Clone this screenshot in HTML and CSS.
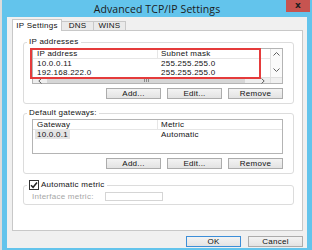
FILE: index.html
```html
<!DOCTYPE html>
<html lang="en">
<head>
    <meta charset="UTF-8">
    <meta name="viewport" content="width=device-width, initial-scale=1.0">
    <title>Advanced TCP/IP Settings</title>
    <link rel="stylesheet" href="styles.css">
</head>
<body>
    <div class="window">
        <div class="titlebar">
            <span class="title">Advanced TCP/IP Settings</span>
            <span class="close-btn">x</span>
        </div>
        <div class="client">
            <div class="tabs">
                <span class="tab active">IP Settings</span>
                <span class="tab">DNS</span>
                <span class="tab">WINS</span>
            </div>
            <div class="tab-panel">
                <fieldset class="group">
                    <legend>IP addresses</legend>
                    <div class="listview scrolled">
                        <div class="list-body">
                            <div class="lv-row lv-header"><span class="col-a">IP address</span><span class="col-b">Subnet mask</span></div>
                            <div class="lv-row"><span class="col-a">10.0.0.11</span><span class="col-b">255.255.255.0</span></div>
                            <div class="lv-row"><span class="col-a">192.168.222.0</span><span class="col-b">255.255.255.0</span></div>
                        </div>
                        <div class="vscroll">
                            <span class="arrow-box">
                                <svg width="7" height="4" viewBox="0 0 7 4"><path d="M0.5 3.5 L3.5 0.5 L6.5 3.5" fill="none" stroke="#606060" stroke-width="1"/></svg>
                            </span>
                            <span class="arrow-box">
                                <svg width="7" height="4" viewBox="0 0 7 4"><path d="M0.5 0.5 L3.5 3.5 L6.5 0.5" fill="none" stroke="#606060" stroke-width="1"/></svg>
                            </span>
                        </div>
                        <div class="hscroll">
                            <span class="harrow">
                                <svg width="4" height="6" viewBox="0 0 4 6"><path d="M3.5 0.5 L0.8 3 L3.5 5.5" fill="none" stroke="#606060" stroke-width="1"/></svg>
                            </span>
                            <span class="thumb"><span class="grip"></span></span>
                            <span class="harrow">
                                <svg width="4" height="6" viewBox="0 0 4 6"><path d="M0.5 0.5 L3.2 3 L0.5 5.5" fill="none" stroke="#606060" stroke-width="1"/></svg>
                            </span>
                        </div>
                        <div class="corner"></div>
                        <div class="red-mark"></div>
                    </div>
                    <div class="btn-row">
                        <button class="btn">Add...</button>
                        <button class="btn">Edit...</button>
                        <button class="btn">Remove</button>
                    </div>
                </fieldset>

                <fieldset class="group">
                    <legend>Default gateways:</legend>
                    <div class="listview">
                        <div class="lv-row lv-header"><span class="col-a">Gateway</span><span class="col-b">Metric</span></div>
                        <div class="lv-row"><span class="col-a"><span class="sel">10.0.0.1</span></span><span class="col-b">Automatic</span></div>
                    </div>
                    <div class="btn-row">
                        <button class="btn">Add...</button>
                        <button class="btn">Edit...</button>
                        <button class="btn">Remove</button>
                    </div>
                </fieldset>

                <fieldset class="group metric-group">
                    <legend class="check-legend">
                        <span class="checkbox">
                            <svg width="8" height="8" viewBox="0 0 8 8"><path d="M1 4.2 L3.1 6.3 L7 1.5" fill="none" stroke="#222" stroke-width="1.5"/></svg>
                        </span>
                        Automatic metric
                    </legend>
                    <div class="metric-row">
                        <span class="metric-label">Interface metric:</span>
                        <span class="metric-input"></span>
                    </div>
                </fieldset>
            </div>
            <div class="footer">
                <button class="btn default">OK</button>
                <button class="btn">Cancel</button>
            </div>
        </div>
    </div>
</body>
</html>
```

FILE: styles.css
```css
* {
    box-sizing: border-box;
}
html, body {
    margin: 0;
}
body {
    width: 312px;
    height: 250px;
    overflow: hidden;
    background: #dcdcdc;
    font-family: "Liberation Sans", Arial, sans-serif;
    font-size: 8px;
    letter-spacing: 0.25px;
    color: #111;
}
.window {
    margin-left: 2px;
    height: 250px;
    background: #63c4ec;
    padding: 0 5px 2px;
    display: flex;
    flex-direction: column;
}
.titlebar {
    height: 17px;
    margin: 0 -5px;
    position: relative;
    display: flex;
    align-items: center;
    justify-content: center;
}
.title {
    font-family: "Open Sans", sans-serif;
    font-size: 10.5px;
    letter-spacing: 0.1px;
    color: #1b1b1b;
}
.close-btn {
    position: absolute;
    top: 0;
    right: 2px;
    width: 24px;
    height: 12px;
    background: #c75450;
    color: #1e1e1e;
    font: bold 9px/11px "DejaVu Sans", sans-serif;
    text-align: center;
}
.client {
    flex: 1;
    background: #f0f0f0;
    padding: 2px 4px 0 5px;
    display: flex;
    flex-direction: column;
}

/* tabs */
.tabs {
    display: flex;
    align-items: flex-end;
    height: 11px;
}
.tab {
    width: 33px;
    height: 9px;
    margin-left: -1px;
    border: 1px solid #c8c8c8;
    border-bottom: 0;
    background: #eaeaea;
    line-height: 8px;
    text-align: center;
}
.tab.active {
    width: 50px;
    height: 12px;
    margin-left: 0;
    margin-bottom: -1px;
    background: #fff;
    line-height: 11px;
    position: relative;
    z-index: 1;
}
.tab-panel {
    flex: 1;
    background: #fff;
    border: 1px solid #c8c8c8;
    padding: 6px 8px 0 10px;
}

/* group boxes */
.group {
    margin: 0;
    min-width: 0;
    border: 1px solid #dcdcdc;
    border-radius: 3px;
    padding: 1px 10px 4px 8px;
}
.group + .group {
    margin-top: 4px;
}
legend {
    padding: 0 2px;
    margin-left: -5px;
    line-height: 10px;
}
.metric-group {
    margin-top: 6px !important;
    padding-top: 2px;
    padding-bottom: 3px;
}
.check-legend {
    display: flex;
    align-items: center;
    gap: 2px;
}
.checkbox {
    width: 10px;
    height: 10px;
    border: 1px solid #333;
    background: #fff;
    display: flex;
    align-items: center;
    justify-content: center;
}

/* list views */
.listview {
    position: relative;
    height: 35px;
    border: 1px solid #b4b4b4;
    background: #fff;
}
.listview.scrolled {
    height: 36px;
    display: grid;
    grid-template-columns: 1fr 12px;
    grid-template-rows: 1fr 6px;
}
.lv-row {
    display: flex;
    height: 9px;
    line-height: 9px;
}
.lv-header {
    height: 10px;
    border-bottom: 1px solid #e6e6e6;
}
.col-a {
    width: 125px;
    padding-left: 4px;
}
.lv-header .col-a {
    border-right: 1px solid #e6e6e6;
}
.col-b {
    padding-left: 3px;
}
.sel {
    background: #e4e4e4;
    padding: 0 2px;
    margin-left: -2px;
}
.vscroll {
    border-left: 1px solid #e0e0e0;
    background: #fafafa;
    display: flex;
    flex-direction: column;
    justify-content: space-between;
    padding-bottom: 2px;
}
.arrow-box {
    height: 10px;
    display: flex;
    align-items: center;
    justify-content: center;
}
.hscroll {
    display: flex;
    background: #eeeeee;
    border-top: 1px solid #e0e0e0;
}
.harrow {
    width: 14px;
    display: flex;
    align-items: center;
    justify-content: center;
}
.harrow:last-child {
    margin-left: auto;
}
.thumb {
    width: 198px;
    background: #d6d6d6;
    display: flex;
    align-items: center;
    justify-content: center;
}
.grip {
    width: 5px;
    height: 3px;
    border-left: 1px solid #8a8a8a;
    border-right: 1px solid #8a8a8a;
    background: linear-gradient(90deg, transparent 1px, #8a8a8a 1px, #8a8a8a 2px, transparent 2px);
}
.corner {
    background: #f0f0f0;
    border-top: 1px solid #e0e0e0;
    border-left: 1px solid #e0e0e0;
}
.red-mark {
    position: absolute;
    left: -3px;
    top: -1px;
    width: 231px;
    height: 31px;
    border: 2px solid #e53b3b;
}

/* buttons */
.btn-row {
    display: flex;
    justify-content: flex-end;
    gap: 6px;
    margin-top: 4px;
}
.btn {
    width: 55px;
    height: 11px;
    padding: 0;
    border: 1px solid #acacac;
    border-radius: 0;
    background: linear-gradient(#f3f3f3, #e3e3e3);
    font-family: "Liberation Sans", Arial, sans-serif;
    font-size: 8px;
    letter-spacing: 0.25px;
    line-height: 9px;
    color: #111;
}
.btn.default {
    border-color: #3c8ed8;
}

/* interface metric */
.metric-row {
    display: flex;
    align-items: center;
    height: 9px;
}
.metric-label {
    width: 73px;
    color: #a6a6a6;
}
.metric-input {
    width: 58px;
    height: 9px;
    border: 1px solid #d5d5d5;
    background: #fff;
}
.footer {
    height: 17px;
    display: flex;
    justify-content: flex-end;
    gap: 7px;
    padding-top: 5px;
}
```
